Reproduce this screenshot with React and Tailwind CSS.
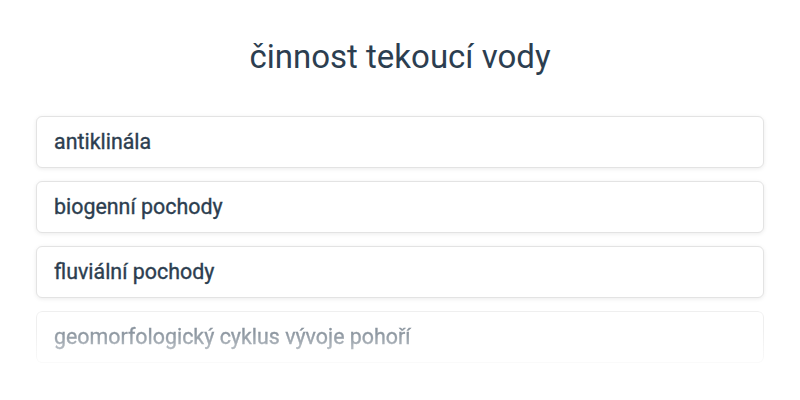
const ITEMS = [
  'antiklinála',
  'biogenní pochody',
  'fluviální pochody',
  'geomorfologický cyklus vývoje pohoří',
];

export default function App() {
  return (
    <div className="w-[800px] h-[400px] bg-white overflow-hidden font-['Roboto',sans-serif] text-[#2c3e50]">
      <h1 className="pt-[36px] text-center text-[33px] leading-[42px] font-normal">činnost tekoucí vody</h1>
      <div className="mt-[38px] px-[36px] flex flex-col gap-[13px]">
        {ITEMS.map((item, i) => (
          <div
            key={item}
            className={
              'h-[52px] flex items-center px-[17px] rounded-[6px] border border-[#e3e3e3] bg-white shadow-[0_1px_4px_rgba(0,0,0,0.08)] text-[21.4px] font-normal text-[#2c3e50] [-webkit-text-stroke:0.35px_currentColor] ' +
              (i === 3 ? 'opacity-55 [mask-image:linear-gradient(to_bottom,black_40%,rgba(0,0,0,0.35)_100%)]' : '')
            }
          >
            {item}
          </div>
        ))}
      </div>
    </div>
  );
}
